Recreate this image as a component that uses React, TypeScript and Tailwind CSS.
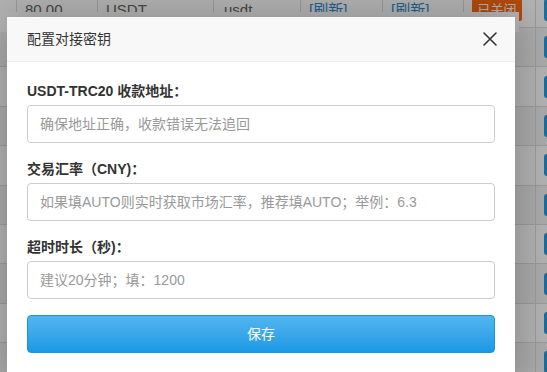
import React from "react";

const cols = [16, 81, 116, 87, 82, 81, 72, 40];

const Row = ({ first, striped }: { first?: boolean; striped?: boolean }) => (
  <div className={`flex h-[39.4px] shrink-0 border-b border-[#ddd] ${striped ? "bg-[#f4f4f4]" : "bg-white"}`}>
    {cols.map((w, i) => (
      <div
        key={i}
        style={{ width: w }}
        className={`flex shrink-0 items-center pl-[8px] text-[15px] text-[#666] ${i > 0 ? "border-l border-[#ddd]" : ""} ${first ? "pt-[4px]" : ""}`}
      >
        {first && i === 1 && <span>80.00</span>}
        {first && i === 2 && <span>USDT</span>}
        {first && i === 3 && <span className="pl-[2px]">usdt</span>}
        {first && i === 4 && <span className="text-[#2d8cd4]">[刷新]</span>}
        {first && i === 5 && <span className="text-[#2d8cd4]">[刷新]</span>}
        {first && i === 6 && (
          <span className="flex h-[22px] w-[50px] items-center justify-center rounded-[2px] bg-[#ff6a10] text-[13px] text-white">
            已关闭
          </span>
        )}
        {i === 7 && <span className="h-[22px] w-[40px] shrink-0 rounded-l-[3px] bg-[#2a9de6]" />}
      </div>
    ))}
  </div>
);

const Field = ({ label, placeholder }: { label: string; placeholder: string }) => (
  <div className="mb-[16px] flex flex-col">
    <label className="mb-[4px] h-[20px] text-[14px] font-bold leading-[20px] text-[#333]">{label}</label>
    <input
      placeholder={placeholder}
      className="h-[38px] rounded-[4px] border border-[#ccc] bg-white px-[12px] text-[14px] text-[#333] outline-none placeholder:text-[#999]"
    />
  </div>
);

export default function App() {
  return (
    <div className="relative h-[372px] w-[547px] overflow-hidden bg-white font-['Liberation_Sans','Noto_Sans_CJK_SC',sans-serif]">
      <div className="-mt-[11.4px] flex flex-col">
        {Array.from({ length: 11 }).map((_, i) => (
          <Row key={i} first={i === 0} striped={i % 2 === 1} />
        ))}
      </div>

      <div className="absolute inset-0 bg-black/30" />
      <div className="absolute left-0 top-[12px] h-[20px] w-[519px] bg-[#b4b4b4]" />

      <div className="absolute left-[7px] top-[17px] w-[508px] bg-white shadow-[1px_1px_40px_rgba(0,0,0,0.25)]">
        <div className="flex h-[45px] items-center justify-between border-b border-[#eee] bg-[#f8f8f8] pl-[20px] pr-[18px]">
          <span className="text-[14px] text-[#333]">配置对接密钥</span>
          <svg width="14" height="14" viewBox="0 0 14 14" className="text-[#333]">
            <path d="M1 1 L13 13 M13 1 L1 13" stroke="currentColor" strokeWidth="1.6" strokeLinecap="round" />
          </svg>
        </div>
        <div className="flex flex-col px-[20px] pb-[30px] pt-[19px]">
          <Field label="USDT-TRC20 收款地址：" placeholder="确保地址正确，收款错误无法追回" />
          <Field label="交易汇率（CNY)：" placeholder="如果填AUTO则实时获取市场汇率，推荐填AUTO；举例：6.3" />
          <Field label="超时时长（秒)：" placeholder="建议20分钟；填：1200" />
          <button className="h-[38px] rounded-[4px] border border-[#1d93dd] bg-gradient-to-b from-[#52b5ef] to-[#1899e5] text-[14px] text-white">
            保存
          </button>
        </div>
      </div>
    </div>
  );
}
